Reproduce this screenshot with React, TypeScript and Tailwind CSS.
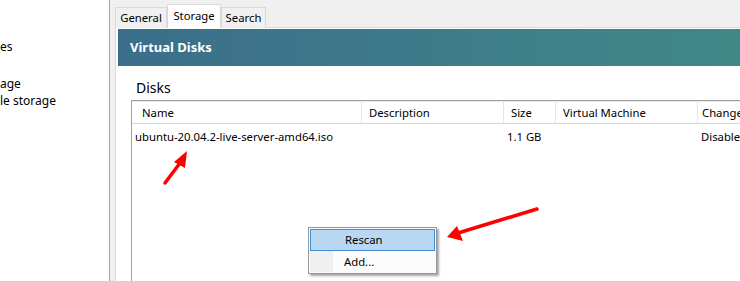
import React from "react";

const font = { fontFamily: '"Noto Sans", "Open Sans", sans-serif' };

export default function App() {
  return (
    <div
      className="relative flex w-[740px] h-[281px] overflow-hidden bg-[#f0f0f0] text-[11.3px] text-black leading-none"
      style={font}
    >
      {/* Left nav */}
      <div className="w-[110px] shrink-0 bg-white border-r border-[#a0a0a0] flex flex-col text-[12px]">
        <div className="h-[38px] shrink-0" />
        <div className="h-[17px] shrink-0 flex items-center">es</div>
        <div className="h-[20px] shrink-0" />
        <div className="h-[17px] shrink-0 flex items-center">age</div>
        <div className="h-[17px] shrink-0 flex items-center">le storage</div>
      </div>
      <div className="w-[5px] shrink-0 bg-[#f0f0f0]" />

      {/* Right side */}
      <div className="flex-1 flex flex-col min-w-0 h-full">
        {/* Tab bar */}
        <div className="h-[28px] shrink-0 flex items-end border-b border-[#d9d9d9] relative">
          <div className="h-[21px] w-[52px] mb-[-1px] border border-[#d9d9d9] border-b-0 bg-[#f0f0f0] flex items-center justify-center">
            General
          </div>
          <div className="h-[24px] w-[54px] mb-[-1px] border border-[#d9d9d9] border-b-0 bg-white flex items-center justify-center relative z-10 pb-[2px]">
            Storage
          </div>
          <div className="h-[21px] w-[45px] mb-[-1px] border border-[#d9d9d9] border-b-0 bg-[#f0f0f0] flex items-center justify-center">
            Search
          </div>
        </div>

        {/* Panel */}
        <div className="flex-1 min-h-0 overflow-hidden bg-white border-l border-[#d9d9d9] pl-[2px] pt-[1px] flex flex-col min-w-0">
          <div className="h-[37px] shrink-0 bg-gradient-to-r from-[#3b6e8a] to-[#418888] flex items-center pl-[12px] text-white font-bold text-[13px]">
            Virtual Disks
          </div>
          <div className="pl-[13px] flex flex-col shrink-0">
            <div className="h-[34px] shrink-0 flex items-end pl-[5px] pb-[5px] text-[14px]">Disks</div>
            <div className="border-t border-l border-[#a0a0a0] flex flex-col shrink-0">
              <div className="h-[23px] shrink-0 flex border-b border-[#d5d5d5] border-t border-t-[#e8e8e8]">
                <div className="w-[230px] shrink-0 border-r border-[#e5e5e5] flex items-center pl-[10px]">Name</div>
                <div className="w-[142px] shrink-0 border-r border-[#e5e5e5] flex items-center pl-[7px]">Description</div>
                <div className="w-[52px] shrink-0 border-r border-[#e5e5e5] flex items-center pl-[7px]">Size</div>
                <div className="w-[142px] shrink-0 border-r border-[#e5e5e5] flex items-center pl-[7px]">Virtual Machine</div>
                <div className="flex-1 flex items-center pl-[4px] whitespace-nowrap">Change Tracking</div>
              </div>
              <div className="h-[25px] shrink-0 flex">
                <div className="w-[230px] shrink-0 flex items-center pl-[3px]">ubuntu-20.04.2-live-server-amd64.iso</div>
                <div className="w-[142px] shrink-0" />
                <div className="w-[52px] shrink-0 flex items-center pl-[3px]">1.1 GB</div>
                <div className="w-[142px] shrink-0" />
                <div className="flex-1 flex items-center pl-[3px] whitespace-nowrap">Disabled</div>
              </div>
              <div className="h-[200px] shrink-0" />
            </div>
          </div>
        </div>
      </div>

      {/* Context menu */}
      <div className="absolute left-[308px] top-[227px] w-[129px] h-[47px] bg-[#fcfcfc] border border-[#979797] shadow-[2px_2px_2px_rgba(0,0,0,0.35)] p-[1px] flex flex-col">
        <div className="h-[22px] bg-[#b9d7f3] border border-[#3c8fd8] flex items-center pl-[34px]">Rescan</div>
        <div className="h-[22px] flex items-center">
          <div className="w-[23px] h-full bg-[#f0f0f0]" />
          <div className="pl-[11px]">Add...</div>
        </div>
      </div>

      {/* Arrows */}
      <svg className="absolute left-0 top-0 pointer-events-none" width="740" height="281" viewBox="0 0 740 281">
        <line x1="165" y1="183" x2="180" y2="163" stroke="#ff0000" strokeWidth="3.5" strokeLinecap="round" />
        <polygon points="187,151 174,162 185,168" fill="#ff0000" />
        <line x1="537" y1="209" x2="458" y2="233" stroke="#ff0000" strokeWidth="3.5" strokeLinecap="round" />
        <polygon points="447,237 457,226 463,241" fill="#ff0000" />
      </svg>
    </div>
  );
}
